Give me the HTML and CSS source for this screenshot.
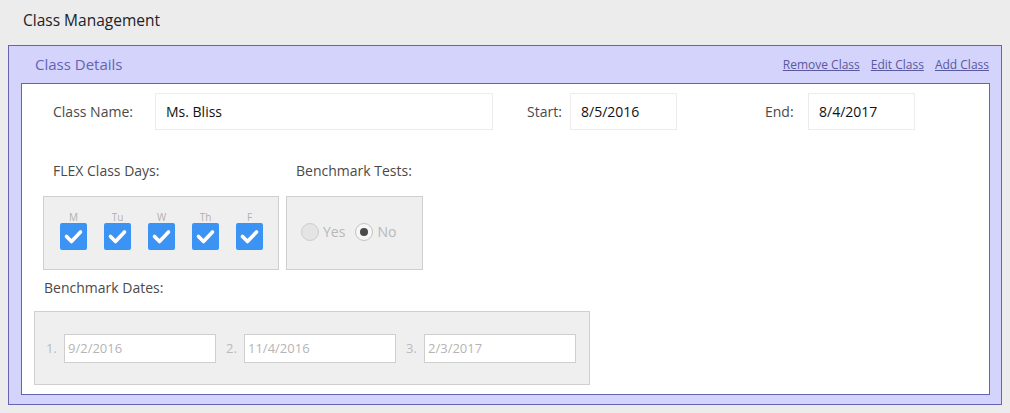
FILE: index.html
```html
<!DOCTYPE html>
<html>
<head>
<meta charset="utf-8">
<link rel="stylesheet" href="styles.css">
</head>
<body>
<div class="page-title">Class Management</div>
<div class="panel">
  <div class="panel-head">
    <div class="panel-title">Class Details</div>
    <div class="panel-links">
      <a href="#">Remove Class</a>
      <a href="#">Edit Class</a>
      <a href="#">Add Class</a>
    </div>
  </div>
  <div class="panel-body">
    <div class="row-main">
      <label class="lbl lbl-name">Class Name:</label>
      <div class="field field-name">Ms. Bliss</div>
      <label class="lbl lbl-start">Start:</label>
      <div class="field field-date">8/5/2016</div>
      <label class="lbl lbl-end">End:</label>
      <div class="field field-date">8/4/2017</div>
    </div>

    <div class="row-opts">
      <div class="opt-col">
        <div class="opt-label">FLEX Class Days:</div>
        <div class="box box-days">
          <div class="day"><span class="day-name">M</span><span class="check"><svg viewBox="0 0 27 27"><polyline points="6.5,13.5 11.5,18.5 20.5,9" /></svg></span></div>
          <div class="day"><span class="day-name">Tu</span><span class="check"><svg viewBox="0 0 27 27"><polyline points="6.5,13.5 11.5,18.5 20.5,9" /></svg></span></div>
          <div class="day"><span class="day-name">W</span><span class="check"><svg viewBox="0 0 27 27"><polyline points="6.5,13.5 11.5,18.5 20.5,9" /></svg></span></div>
          <div class="day"><span class="day-name">Th</span><span class="check"><svg viewBox="0 0 27 27"><polyline points="6.5,13.5 11.5,18.5 20.5,9" /></svg></span></div>
          <div class="day"><span class="day-name">F</span><span class="check"><svg viewBox="0 0 27 27"><polyline points="6.5,13.5 11.5,18.5 20.5,9" /></svg></span></div>
        </div>
      </div>
      <div class="opt-col">
        <div class="opt-label">Benchmark Tests:</div>
        <div class="box box-tests">
          <span class="radio"></span><span class="radio-text">Yes</span>
          <span class="radio radio-on"><span class="dot"></span></span><span class="radio-text">No</span>
        </div>
      </div>
    </div>

    <div class="row-dates">
      <div class="opt-label dates-label">Benchmark Dates:</div>
      <div class="box box-dates">
        <span class="num">1.</span><div class="dfield">9/2/2016</div>
        <span class="num">2.</span><div class="dfield">11/4/2016</div>
        <span class="num">3.</span><div class="dfield">2/3/2017</div>
      </div>
    </div>
  </div>
</div>
</body>
</html>
```

FILE: styles.css
```css
* { box-sizing: border-box; }
body {
  margin: 0;
  background: #ececec;
  font-family: "Open Sans", "Liberation Sans", sans-serif;
  color: #444;
  width: 1010px;
  height: 413px;
  overflow: hidden;
}
.page-title {
  height: 45px;
  padding: 10px 0 0 23px;
  font-size: 15.5px;
  line-height: 20px;
  color: #222;
}
.panel {
  margin: 0 8px;
  height: 360px;
  border: 1px solid #6663b3;
  background: #d3d3fb;
  display: flex;
  flex-direction: column;
}
.panel-head {
  height: 37px;
  display: flex;
  align-items: center;
  justify-content: space-between;
  padding: 0 12px 0 26px;
}
.panel-title {
  font-size: 15px;
  color: #6563b5;
  padding-bottom: 1px;
}
.panel-links {
  display: flex;
  gap: 11px;
  font-size: 12px;
}
.panel-links a {
  color: #5a58a0;
  text-decoration: underline;
}
.panel-body {
  flex: 1;
  margin: 0 11px 9px 12px;
  border: 1px solid #6663b3;
  background: #fff;
}
.row-main {
  display: flex;
  align-items: center;
  padding: 9px 0 0 31px;
}
.lbl {
  font-size: 14px;
  color: #4a4a4a;
}
.lbl-name { width: 102px; }
.lbl-start { margin-left: 34px; width: 43px; }
.lbl-end { margin-left: 88px; width: 43px; }
.field {
  height: 37px;
  border: 1px solid #ececec;
  font-size: 14px;
  color: #111;
  padding-left: 10px;
  display: flex;
  align-items: center;
}
.field-name { width: 338px; }
.field-date { width: 107px; }

.row-opts {
  display: flex;
  gap: 7px;
  padding: 33px 0 0 21px;
}
.opt-label {
  font-size: 14px;
  line-height: 16px;
  color: #4a4a4a;
  padding-left: 10px;
  margin-bottom: 17px;
}
.box {
  height: 74px;
  border: 1px solid #cfcfcf;
  background: #efefef;
}
.box-days {
  width: 236px;
  display: flex;
  gap: 17px;
  padding: 14px 0 0 16px;
}
.day {
  width: 27px;
  display: flex;
  flex-direction: column;
  align-items: center;
}
.day-name {
  font-size: 10px;
  line-height: 12px;
  height: 12px;
  color: #b0b0b0;
}
.check {
  width: 27px;
  height: 27px;
  border-radius: 2px;
  background: #3b94f3;
  display: block;
}
.check svg {
  width: 27px;
  height: 27px;
  display: block;
}
.check polyline {
  fill: none;
  stroke: #fff;
  stroke-width: 3.6;
  stroke-linecap: round;
  stroke-linejoin: round;
}
.box-tests {
  width: 137px;
  display: flex;
  align-items: center;
  padding: 0 0 3px 14px;
}
.radio {
  width: 18px;
  height: 18px;
  border-radius: 50%;
  border: 1px solid #cdcdcd;
  background: #e4e4e4;
  display: flex;
  align-items: center;
  justify-content: center;
}
.radio-on { background: #f6f6f6; border-color: #c4c4c4; }
.dot {
  width: 8px;
  height: 8px;
  border-radius: 50%;
  background: #4a4a4a;
}
.radio-text {
  font-size: 14px;
  color: #b8b8b8;
  margin: 0 10px 0 4px;
}
.row-dates {
  padding: 10px 0 0 12px;
}
.dates-label {
  padding-left: 10px;
  margin-bottom: 15px;
}
.box-dates {
  width: 556px;
  display: flex;
  align-items: center;
  padding-left: 11px;
}
.num {
  font-size: 13px;
  color: #bbb;
  width: 18px;
}
.dfield {
  width: 152px;
  height: 29px;
  border: 1px solid #cfcfcf;
  background: #fff;
  font-size: 13px;
  color: #b5b5b5;
  padding-left: 3px;
  display: flex;
  align-items: center;
  margin-right: 10px;
}
```
